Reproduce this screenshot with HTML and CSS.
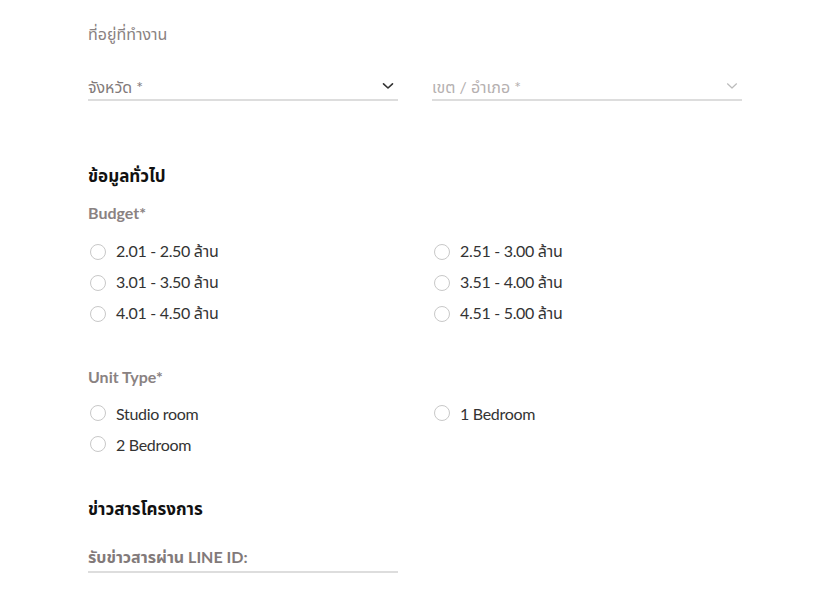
FILE: index.html
```html
<!DOCTYPE html>
<html lang="th">
<head>
<meta charset="utf-8">
<link rel="stylesheet" href="styles.css">
</head>
<body>
<main class="form">
  <section class="block">
    <div class="label">ที่อยู่ที่ทำงาน</div>
    <div class="row2 selects">
      <div class="select">
        <span class="sel-text">จังหวัด *</span>
        <svg class="chev" width="12" height="8" viewBox="0 0 12 8"><path d="M1.5 1.8 L6 6 L10.5 1.8" fill="none" stroke="#333" stroke-width="1.6" stroke-linecap="round" stroke-linejoin="round"/></svg>
      </div>
      <div class="select disabled">
        <span class="sel-text">เขต / อำเภอ *</span>
        <svg class="chev" width="12" height="8" viewBox="0 0 12 8"><path d="M1.5 1.8 L6 6 L10.5 1.8" fill="none" stroke="#bbb" stroke-width="1.2" stroke-linecap="round" stroke-linejoin="round"/></svg>
      </div>
    </div>
  </section>

  <section class="block general">
    <h2 class="title">ข้อมูลทั่วไป</h2>
    <div class="label sub">Budget*</div>
    <div class="row2 radios budget">
      <label class="radio"><span class="dot"></span>2.01 - 2.50 ล้าน</label>
      <label class="radio"><span class="dot"></span>2.51 - 3.00 ล้าน</label>
      <label class="radio"><span class="dot"></span>3.01 - 3.50 ล้าน</label>
      <label class="radio"><span class="dot"></span>3.51 - 4.00 ล้าน</label>
      <label class="radio"><span class="dot"></span>4.01 - 4.50 ล้าน</label>
      <label class="radio"><span class="dot"></span>4.51 - 5.00 ล้าน</label>
    </div>
    <div class="label sub unit">Unit Type*</div>
    <div class="row2 radios units">
      <label class="radio"><span class="dot"></span>Studio room</label>
      <label class="radio"><span class="dot"></span>1 Bedroom</label>
      <label class="radio"><span class="dot"></span>2 Bedroom</label>
    </div>
  </section>

  <section class="block news">
    <h2 class="title">ข่าวสารโครงการ</h2>
    <div class="row2">
      <div class="input"><span class="sel-text muted">รับข่าวสารผ่าน LINE ID:</span></div>
    </div>
  </section>
</main>
</body>
</html>
```

FILE: styles.css
```css
* { box-sizing: border-box; }
html, body { margin: 0; padding: 0; background: #fff; }
body {
  font-family: "Lato", "Noto Sans", "Noto Sans Thai", sans-serif;
  color: #333;
}
.form {
  width: 655px;
  margin: 0 0 0 88px;
  padding-top: 22px;
}
.label {
  color: #8a8282;
  font-size: 16px;
  line-height: 24px;
}
.row2 {
  display: grid;
  grid-template-columns: 310px 310px;
  column-gap: 34px;
}
.selects { margin-top: 31px; }
.select, .input {
  display: flex;
  align-items: center;
  justify-content: space-between;
  height: 24px;
  border-bottom: 2px solid #ddd;
  padding-right: 4px;
}
.input { height: 28px; }
.sel-text { font-size: 16px; color: #827a7a; }
.select.disabled .sel-text { color: #b5b0b0; }
.chev { margin-top: -4px; }
.general { margin-top: 61px; }
.title {
  margin: 0;
  font-size: 17px;
  font-weight: 700;
  color: #111;
  line-height: 28px;
}
.sub { margin-top: 11px; font-weight: 700; }
.radios { row-gap: 7px; }
.budget { margin-top: 15px; }
.units { margin-top: 12px; }
.radio {
  display: flex;
  align-items: center;
  height: 24px;
  font-size: 16px;
  letter-spacing: -0.3px;
  color: #333;
}
.dot {
  width: 16px;
  height: 16px;
  border: 1px solid #c8c8c8;
  border-radius: 50%;
  margin: 0 10px 0 2px;
  flex: none;
}
.unit { margin-top: 39px; }
.news { margin-top: 39px; }
.news .row2 { margin-top: 22px; }
.muted { font-weight: 700; }
```
